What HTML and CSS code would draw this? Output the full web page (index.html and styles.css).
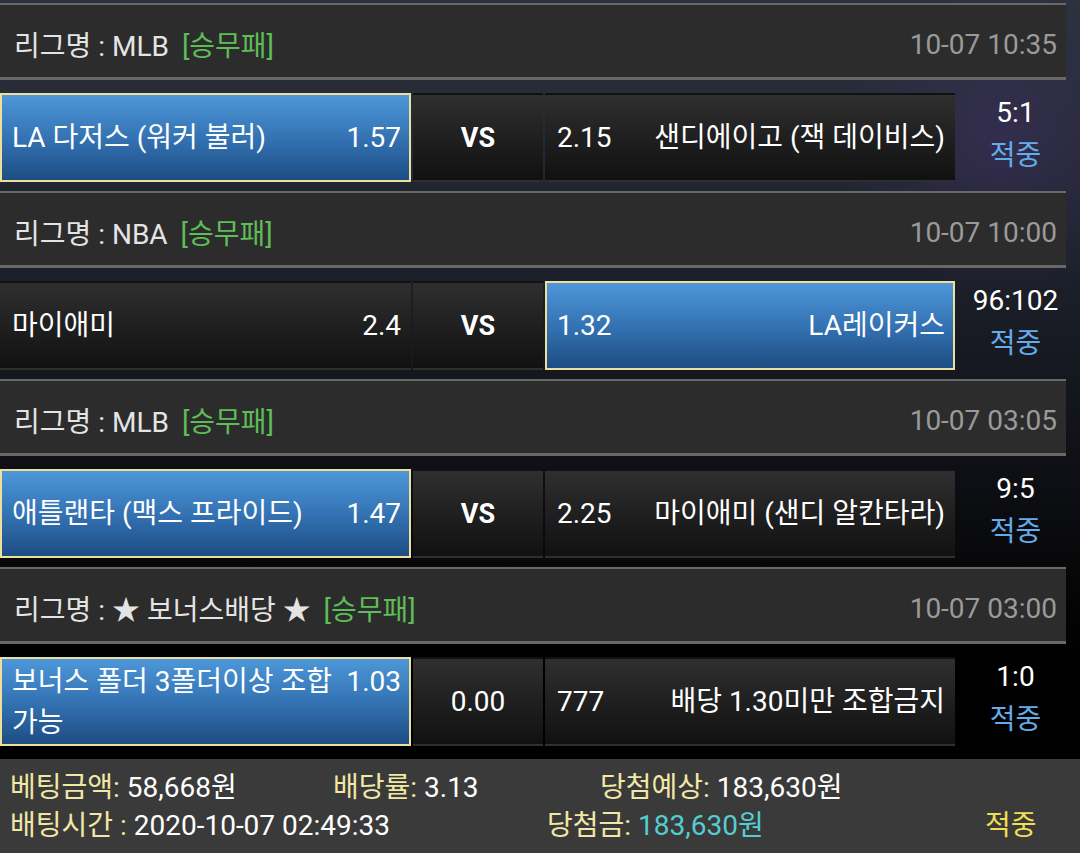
FILE: index.html
```html
<!DOCTYPE html>
<html lang="ko">
<head>
<meta charset="UTF-8">
<title>베팅내역</title>
<link rel="stylesheet" href="styles.css">
</head>
<body>

<div class="list">

  <!-- GAME 1 -->
  <div class="league">
    <div class="league-name">리그명 : MLB <span class="type">[승무패]</span></div>
    <div class="league-time">10-07 10:35</div>
  </div>
  <div class="match">
    <div class="cell pick on">
      <div class="pick-in"><span class="team">LA 다저스 (워커 불러)</span><span class="odds">1.57</span></div>
    </div>
    <div class="cell mid vs">VS</div>
    <div class="cell pick away">
      <div class="pick-in"><span class="odds">2.15</span><span class="team">샌디에이고 (잭 데이비스)</span></div>
    </div>
    <div class="score"><span>5:1</span><span class="hit">적중</span></div>
  </div>

  <!-- GAME 2 -->
  <div class="league">
    <div class="league-name">리그명 : NBA <span class="type">[승무패]</span></div>
    <div class="league-time">10-07 10:00</div>
  </div>
  <div class="match">
    <div class="cell pick">
      <div class="pick-in"><span class="team">마이애미</span><span class="odds">2.4</span></div>
    </div>
    <div class="cell mid vs">VS</div>
    <div class="cell pick away on">
      <div class="pick-in"><span class="odds">1.32</span><span class="team">LA레이커스</span></div>
    </div>
    <div class="score"><span>96:102</span><span class="hit">적중</span></div>
  </div>

  <!-- GAME 3 -->
  <div class="league">
    <div class="league-name">리그명 : MLB <span class="type">[승무패]</span></div>
    <div class="league-time">10-07 03:05</div>
  </div>
  <div class="match">
    <div class="cell pick on">
      <div class="pick-in"><span class="team">애틀랜타 (맥스 프라이드)</span><span class="odds">1.47</span></div>
    </div>
    <div class="cell mid vs">VS</div>
    <div class="cell pick away">
      <div class="pick-in"><span class="odds">2.25</span><span class="team">마이애미 (샌디 알칸타라)</span></div>
    </div>
    <div class="score"><span>9:5</span><span class="hit">적중</span></div>
  </div>

  <!-- GAME 4 -->
  <div class="league">
    <div class="league-name">리그명 : ★ 보너스배당 ★ <span class="type">[승무패]</span></div>
    <div class="league-time">10-07 03:00</div>
  </div>
  <div class="match last">
    <div class="cell pick on">
      <div class="pick-in"><span class="team">보너스 폴더 3폴더이상 조합 가능</span><span class="odds">1.03</span></div>
    </div>
    <div class="cell mid">0.00</div>
    <div class="cell pick away">
      <div class="pick-in"><span class="odds">777</span><span class="team">배당 1.30미만 조합금지</span></div>
    </div>
    <div class="score"><span>1:0</span><span class="hit">적중</span></div>
  </div>

</div>

<!-- SUMMARY -->
<div class="summary">
  <div class="sum-row first">
    <div><span class="lbl">베팅금액:</span> 58,668원</div>
    <div><span class="lbl">배당률:</span> 3.13</div>
    <div><span class="lbl">당첨예상:</span> 183,630원</div>
  </div>
  <div class="sum-row second">
    <div><span class="lbl">배팅시간 :</span> 2020-10-07 02:49:33</div>
    <div><span class="lbl">당첨금:</span> <span class="win">183,630원</span></div>
    <div class="result">적중</div>
  </div>
</div>

</body>
</html>
```

FILE: styles.css
```css
body {
  margin: 0;
  padding-top: 3px;
  width: 1080px;
  height: 853px;
  overflow: hidden;
  font-family: Roboto, "Noto Sans CJK KR", sans-serif;
  font-size: 28px;
  color: #fff;
  word-break: keep-all;
  background:
    radial-gradient(circle at 1000px 140px, rgba(70, 50, 110, 0.45), rgba(0, 0, 0, 0) 160px),
    linear-gradient(180deg, #2c323e 0, #1d212b 260px, #0e0f14 480px, #050506 600px, #000 660px);
}
.list {
  width: 1066px;
}
.league {
  padding: 6px 9px 0 14px;
  box-sizing: border-box;
  height: 77px;
  border-top: 2px solid #686868;
  border-bottom: 3px solid #686868;
  background: #2c2c2c;
  display: flex;
  align-items: center;
  justify-content: space-between;
}
.league-name {
  color: #e4e4e4;
}
.league-name .type {
  margin-left: 6px;
  color: #5fbd58;
}
.league-time {
  color: #9a9a9a;
}
.match {
  display: flex;
  gap: 2px;
  padding: 13px 0 9px;
  height: 89px;
}
.cell {
  box-sizing: border-box;
  height: 89px;
  border: 2px solid transparent;
  background: linear-gradient(180deg, #2f2f2f 0%, #1e1e1e 55%, #111 100%);
  display: flex;
  align-items: center;
}
.cell.on {
  border-color: #efdf9c;
  background: linear-gradient(180deg, #4d97d8 0%, #3473b4 50%, #1d4d83 100%);
}
.pick {
  width: 411px;
  padding: 0 8px 0 10px;
}
.pick.away {
  width: 410px;
}
.pick-in {
  width: 100%;
  display: flex;
  align-items: baseline;
  justify-content: space-between;
  gap: 6px;
  line-height: 41px;
}
.pick .odds {
  white-space: nowrap;
}
.mid {
  width: 130px;
  justify-content: center;
}
.mid.vs {
  font-weight: bold;
  font-size: 27px;
}
.score {
  flex: 1;
  padding-left: 8px;
  display: flex;
  flex-direction: column;
  align-items: center;
  justify-content: center;
  line-height: 43px;
  padding-bottom: 8px;
}
.score .hit {
  color: #64acec;
}
.summary {
  margin-top: 4px;
  height: 94px;
  box-sizing: border-box;
  padding: 10px 0 0 10px;
  background: #3a3a3a;
  line-height: 38px;
}
.sum-row {
  display: grid;
}
.sum-row.first {
  grid-template-columns: 323px 267px 1fr;
}
.sum-row.second {
  grid-template-columns: 537px 438px 1fr;
}
.lbl {
  color: #f2e8a6;
}
.win {
  color: #55cdd0;
}
.result {
  color: #eedf55;
}
```
